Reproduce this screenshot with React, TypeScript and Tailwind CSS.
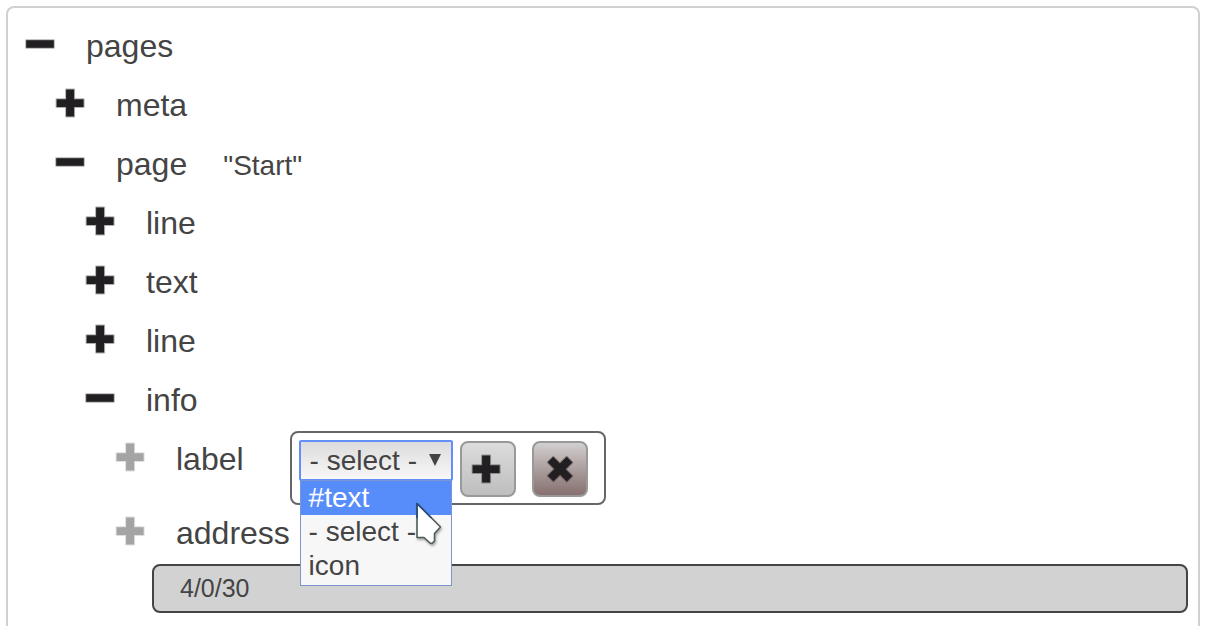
import { useState } from "react";
import type { ReactNode } from "react";

type Shape = "plus" | "minus" | "cross";

function Glyph({ shape }: { shape: Shape }) {
  const d =
    shape === "minus"
      ? "M2.2 12.2h27.6v7.6H2.2z"
      : "M12.1 2.6h8v9.6h9.5v7.8h-9.5v9.4h-8v-9.4H2.6v-7.8h9.5z";
  return (
    <svg viewBox="0 0 32 32" className="block size-8" aria-hidden="true">
      <g transform={shape === "cross" ? "rotate(45 16 16)" : undefined}>
        <path d={d} fill="none" stroke="currentColor" strokeOpacity="0.35" strokeWidth="2" strokeLinejoin="round" />
        <path d={d} fill="currentColor" />
      </g>
    </svg>
  );
}

const indents = ["pl-4", "pl-[46px]", "pl-[76px]", "pl-[106px]"];

type NodeProps = {
  level: number;
  name: string;
  value?: string;
  open?: boolean;
  empty?: boolean;
  children?: ReactNode;
};

function TreeRow({ level, name, value, open, empty, children }: NodeProps) {
  return (
    <div className={`flex min-h-[59px] items-start ${indents[level]}`}>
      <button
        type="button"
        aria-label={`${open ? "Collapse" : "Expand"} ${name}`}
        disabled={empty}
        className={`mr-[30px] flex h-[52px] shrink-0 items-center ${empty ? "text-[#a4a4a4]" : "text-[#221f22]"}`}
      >
        <Glyph shape={open ? "minus" : "plus"} />
      </button>
      <span className="text-[32px] leading-[57px]">
        {name}
        {value && <span className="ml-9 text-[28px]">{value}</span>}
      </span>
      {children}
    </div>
  );
}

function Cursor() {
  return (
    <svg
      viewBox="0 0 32 48"
      className="pointer-events-none absolute top-[18px] left-28 h-12 w-8 drop-shadow-[1px_2px_1px_rgba(0,0,0,0.3)]"
      aria-hidden="true"
    >
      <path
        d="M4 4.5 L27.5 28 L21.5 34.5 V42 L19 44.5 L17 44 L11 38.5 H4 Z"
        fill="#fff"
        stroke="#4d5a5a"
        strokeWidth="1.6"
        strokeLinejoin="round"
      />
      <path d="M4 19V4.5l14.5 14.5" fill="none" stroke="#264b80" strokeWidth="1.6" strokeLinejoin="round" />
    </svg>
  );
}

const choices = ["#text", "- select -", "icon"];

function ChildPicker() {
  const [value, setValue] = useState("- select -");
  return (
    <div className="ml-[46px] flex items-start rounded-lg border-2 border-[#666] pt-[7px] pr-4 pb-1.5 pl-[7px]">
      <div className="relative">
        <select
          aria-label="Child element"
          value={value}
          onChange={(e) => setValue(e.target.value)}
          className="block h-[41px] w-[154px] appearance-none rounded-xs border-2 border-[#648ffb] bg-linear-to-b from-[#dcdcdc] to-[#f8f8f8] pl-[9px] text-[28px] leading-9 text-[#444] outline-none"
        >
          {choices.map((c) => (
            <option key={c}>{c}</option>
          ))}
        </select>
        <svg viewBox="0 0 12 12" className="pointer-events-none absolute top-3.5 right-3 size-3" aria-hidden="true">
          <path d="M0 0h12L6 12z" fill="#444" />
        </svg>
        <ul
          role="listbox"
          aria-label="Child element choices"
          className="absolute top-10 left-px z-10 w-38 border border-[#7c94d0] bg-[#f7f7f7] pb-0.5 text-[28px]"
        >
          {choices.map((c, i) => (
            <li
              key={c}
              role="option"
              aria-selected={i === 0}
              className={`px-2 leading-[34px] whitespace-nowrap ${i === 0 ? "bg-[#578dfb] text-white" : ""}`}
            >
              {c}
            </li>
          ))}
          <li role="presentation" aria-hidden="true">
            <Cursor />
          </li>
        </ul>
      </div>
      <button
        type="button"
        aria-label="Add element"
        className="mt-px ml-[7px] flex size-14 items-center justify-center rounded-lg border-2 border-[#999] bg-linear-to-b from-[#dcdcdc] to-[#bebebe] pr-1 text-[#221f22]"
      >
        <Glyph shape="plus" />
      </button>
      <button
        type="button"
        aria-label="Remove element"
        className="mt-px ml-4 flex size-14 items-center justify-center rounded-lg border-2 border-[#999] bg-linear-to-b from-[#d2d0d0] to-[#877070] text-[#221f22]"
      >
        <Glyph shape="cross" />
      </button>
    </div>
  );
}

export default function App() {
  return (
    <main className="flex min-h-screen flex-col bg-white pt-1.5 pr-3 pl-1.5 font-['Liberation_Sans',Arial,sans-serif] text-[#444]">
      <section className="flex-1 rounded-t-lg border-2 border-b-0 border-[#d0d0d0] pt-2.5">
        <TreeRow level={0} name="pages" open />
        <TreeRow level={1} name="meta" />
        <TreeRow level={1} name="page" value={'"Start"'} open />
        <TreeRow level={2} name="line" />
        <TreeRow level={2} name="text" />
        <TreeRow level={2} name="line" />
        <TreeRow level={2} name="info" open />
        <TreeRow level={3} name="label" empty>
          <ChildPicker />
        </TreeRow>
        <TreeRow level={3} name="address" empty />
        <div className="pr-2.5 pl-36">
          <input
            aria-label="Address"
            defaultValue="4/0/30"
            className="block h-[49px] w-full rounded-lg border-2 border-[#444] bg-[#d2d2d2] px-[26px] text-[25px] outline-none"
          />
        </div>
      </section>
    </main>
  );
}
